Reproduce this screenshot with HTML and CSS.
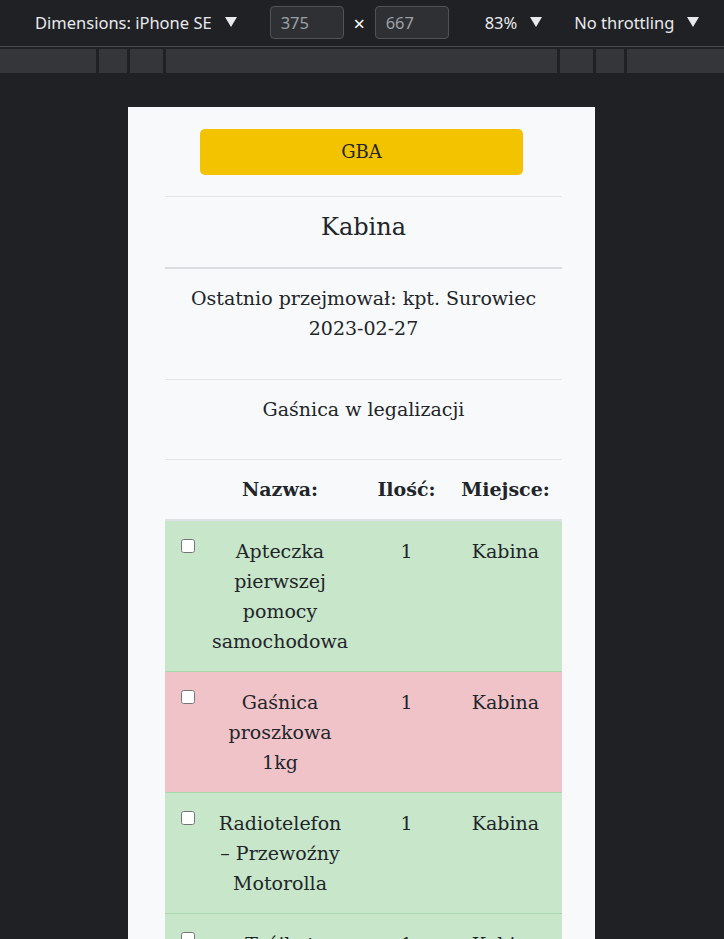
FILE: index.html
```html
<!DOCTYPE html>
<html lang="pl">
<head>
    <meta charset="UTF-8" />
    <meta name="viewport" content="width=device-width, initial-scale=1.0" />
    <link rel="stylesheet" href="styles.css">
    <title>Kabina - GBA</title>
</head>
<body>
    <div class="toolbar">
        <div class="tool-item dims">Dimensions: iPhone SE <span class="caret"></span></div>
        <div class="size-box">375</div>
        <div class="times">×</div>
        <div class="size-box">667</div>
        <div class="tool-item zoom">83% <span class="caret"></span></div>
        <div class="tool-item throttle">No throttling <span class="caret"></span></div>
    </div>

    <div class="ruler">
        <div class="ruler-seg r1"></div>
        <div class="ruler-seg r2"></div>
        <div class="ruler-seg r3"></div>
        <div class="ruler-seg r4"></div>
        <div class="ruler-seg r3"></div>
        <div class="ruler-seg r2"></div>
        <div class="ruler-seg r1 last"></div>
    </div>

    <div class="stage">
        <div class="device">
            <a class="car-btn" href="#">GBA</a>

            <div class="content">
                <div class="section title">Kabina</div>

                <div class="section info">
                    Ostatnio przejmował: kpt. Surowiec<br>
                    2023-02-27
                </div>

                <div class="section notice">Gaśnica w legalizacji</div>

                <table class="items">
                    <colgroup>
                        <col class="c-check">
                        <col class="c-name">
                        <col class="c-qty">
                        <col class="c-place">
                    </colgroup>
                    <thead>
                        <tr>
                            <th></th>
                            <th>Nazwa:</th>
                            <th>Ilość:</th>
                            <th>Miejsce:</th>
                        </tr>
                    </thead>
                    <tbody>
                        <tr class="ok">
                            <td class="check"><input type="checkbox"></td>
                            <td>Apteczka pierwszej pomocy samochodowa</td>
                            <td>1</td>
                            <td>Kabina</td>
                        </tr>
                        <tr class="missing">
                            <td class="check"><input type="checkbox"></td>
                            <td>Gaśnica proszkowa 1kg</td>
                            <td>1</td>
                            <td>Kabina</td>
                        </tr>
                        <tr class="ok">
                            <td class="check"><input type="checkbox"></td>
                            <td>Radiotelefon – Przewoźny Motorolla</td>
                            <td>1</td>
                            <td>Kabina</td>
                        </tr>
                        <tr class="ok">
                            <td class="check"><input type="checkbox"></td>
                            <td>Trójkąt ostrzegawczy</td>
                            <td>1</td>
                            <td>Kabina</td>
                        </tr>
                    </tbody>
                </table>
            </div>
        </div>
    </div>
</body>
</html>
```

FILE: styles.css
```css
* {
    box-sizing: border-box;
}

html, body {
    margin: 0;
    height: 939px;
    overflow: hidden;
}

body {
    background-color: #202124;
    font-family: "Noto Sans", "Open Sans", sans-serif;
    color: #e8eaed;
}

/* devtools bar */
.toolbar {
    height: 47px;
    padding-bottom: 2px;
    display: flex;
    align-items: center;
    font-size: 16.5px;
    border-bottom: 1px solid #4a4b4e;
}

.tool-item {
    display: flex;
    align-items: center;
    white-space: nowrap;
}

.caret {
    display: inline-block;
    width: 0;
    height: 0;
    margin-left: 13px;
    border-left: 6px solid transparent;
    border-right: 6px solid transparent;
    border-top: 10px solid #e8eaed;
}

.dims {
    margin-left: 35px;
}

.size-box {
    width: 74px;
    height: 33px;
    margin-left: 33px;
    padding-left: 10px;
    line-height: 31px;
    color: #9aa0a6;
    background-color: #2f3033;
    border: 1px solid #505255;
    border-radius: 4px;
}

.times {
    width: 31px;
    margin-top: 3px;
    text-align: center;
    font-size: 20px;
    color: #ffffff;
}

.size-box + .times + .size-box {
    margin-left: 0;
}

.zoom {
    margin-left: 36px;
}

.throttle {
    margin-left: 32px;
}

.ruler {
    display: flex;
    height: 24px;
    margin-top: 2px;
    background-color: #35363a;
}

.ruler-seg {
    border-right: 3px solid #202124;
}

.r1 { width: 99px; }
.r2 { width: 31px; }
.r3 { width: 36px; }
.r4 { width: 394px; }

.ruler-seg.last {
    border-right: none;
    flex: 1;
}

/* emulated phone */
.stage {
    padding-top: 34px;
}

.device {
    width: 467px;
    height: 840px;
    margin-left: 128px;
    padding-top: 22px;
    background-color: #f8f9fa;
    color: #212529;
    font-family: "DejaVu Serif", "Liberation Serif", serif;
    font-size: 19px;
    line-height: 30px;
    overflow: hidden;
}

.car-btn {
    display: block;
    width: 323px;
    height: 46px;
    margin: 0 auto;
    line-height: 46px;
    text-align: center;
    font-size: 18px;
    color: #212529;
    text-decoration: none;
    background-color: #f4c300;
    border-radius: 5px;
}

.content {
    width: 397px;
    margin: 21px 0 0 37px;
}

.section {
    text-align: center;
    border-top: 1px solid #e3e4e6;
}

.title {
    padding: 10px 0 20px;
    font-size: 24px;
    line-height: 40px;
}

.info {
    padding: 14px 0 36px;
    border-top: 2px solid #dcdde0;
}

.notice {
    padding: 14px 0 35px;
}

.items {
    width: 397px;
    table-layout: fixed;
    border-collapse: collapse;
    border-top: 1px solid #e3e4e6;
}

.c-check { width: 31px; }
.c-name { width: 168px; }
.c-qty { width: 85px; }
.c-place { width: 113px; }

.items th {
    padding: 14px 0 15px;
    font-weight: bold;
    text-align: center;
    border-bottom: 2px solid #dee2e6;
}

.items td {
    padding: 15px 15px;
    text-align: center;
    vertical-align: top;
    border-bottom: 1px solid #a9d8ac;
}

.items td.check {
    padding: 15px 0 0 12px;
    text-align: left;
}

.check input {
    display: block;
    width: 14px;
    height: 14px;
    margin: 3px 0 0 4px;
}

tr.ok td {
    background-color: #c8e6ca;
}

tr.missing td {
    background-color: #f0c3c9;
}
```
